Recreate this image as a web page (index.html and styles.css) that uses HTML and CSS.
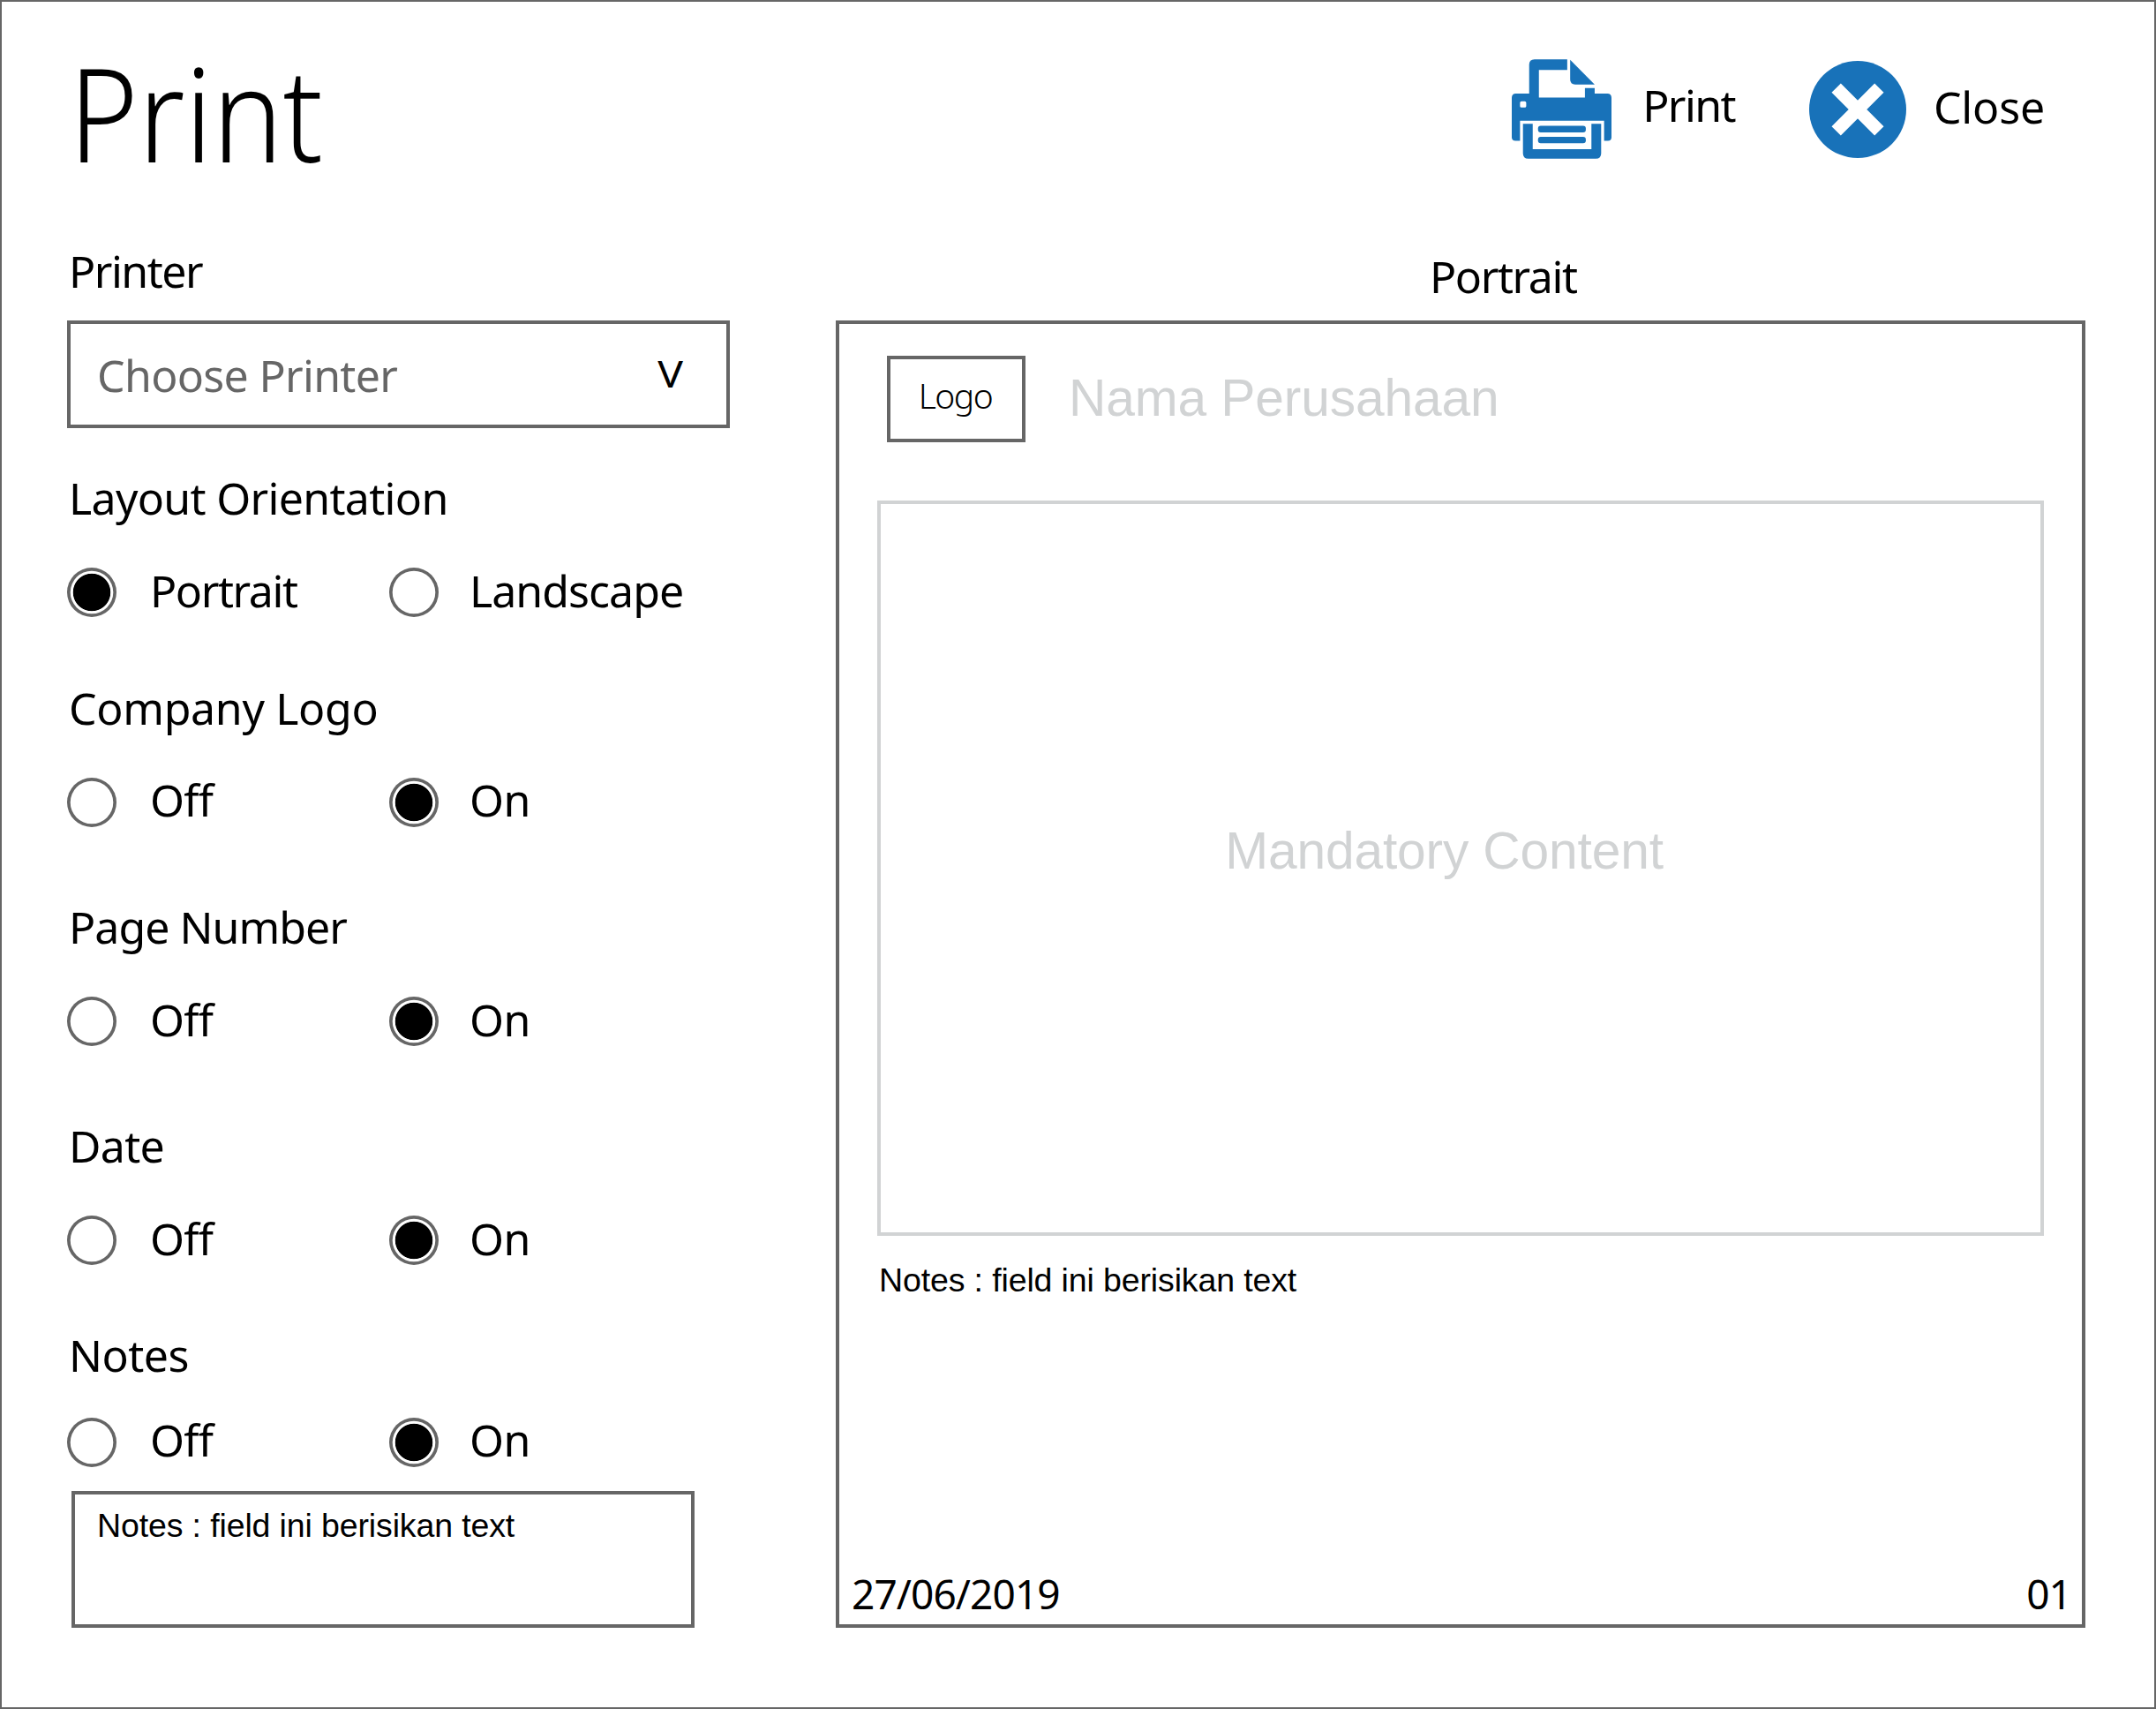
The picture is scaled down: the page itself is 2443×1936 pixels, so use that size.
FILE: index.html
```html
<!DOCTYPE html>
<html lang="en">
<head>
<meta charset="utf-8">
<title>Print</title>
<link rel="stylesheet" href="styles.css">
</head>
<body>
<div class="window">
  <header class="header">
    <h1 class="title">Print</h1>
    <div class="actions">
      <div class="action action-print">
        <svg class="icon-print" viewBox="73 81 338 338" aria-hidden="true">
          <path fill-rule="evenodd" d="M132 198V100Q132 82 150 82H261V118H165V211H321V179H354V198H397Q411 198 411 212V346Q411 358 399 358H386V290H101V358H86Q73 358 73 346V212Q73 198 87 198ZM106 224Q101 224 101 229V240Q101 245 106 245H117Q122 245 122 240V229Q122 224 117 224Z"/>
          <path d="M271 83L354 167H288Q271 167 271 150Z"/>
          <path d="M111 300H144V386H343V300H376V400Q376 418 358 418H129Q111 418 111 400Z"/>
          <rect x="162" y="307" width="162" height="22" rx="9"/>
          <rect x="162" y="344" width="162" height="22" rx="9"/>
        </svg>
        <span class="text action-label ls-print">Print</span>
      </div>
      <div class="action action-close">
        <svg class="icon-close" viewBox="0 0 330 330" aria-hidden="true">
          <circle cx="165" cy="165" r="165"/>
          <path class="cross" d="M92 92L238 238M238 92L92 238"/>
        </svg>
        <span class="text action-label ls-close">Close</span>
      </div>
    </div>
  </header>

  <main class="main">
    <section class="settings">
      <h2 class="text heading ls-printer">Printer</h2>
      <div class="select">
        <span class="text placeholder">Choose Printer</span>
        <span class="text arrow">V</span>
      </div>

      <div class="group group-layout">
        <h2 class="text heading ls-layout">Layout Orientation</h2>
        <div class="options">
          <div class="option"><i class="radio on"></i><span class="text ls-portrait">Portrait</span></div>
          <div class="option"><i class="radio"></i><span class="text ls-landscape">Landscape</span></div>
        </div>
      </div>
      <div class="group group-logo">
        <h2 class="text heading ls-company">Company Logo</h2>
        <div class="options raised">
          <div class="option"><i class="radio"></i><span class="text ls-off">Off</span></div>
          <div class="option"><i class="radio on"></i><span class="text ls-on">On</span></div>
        </div>
      </div>
      <div class="group group-page">
        <h2 class="text heading ls-page">Page Number</h2>
        <div class="options">
          <div class="option"><i class="radio"></i><span class="text ls-off">Off</span></div>
          <div class="option"><i class="radio on"></i><span class="text ls-on">On</span></div>
        </div>
      </div>
      <div class="group group-date">
        <h2 class="text heading ls-date">Date</h2>
        <div class="options">
          <div class="option"><i class="radio"></i><span class="text ls-off">Off</span></div>
          <div class="option"><i class="radio on"></i><span class="text ls-on">On</span></div>
        </div>
      </div>
      <div class="group group-notes">
        <h2 class="text heading ls-notes">Notes</h2>
        <div class="options raised">
          <div class="option"><i class="radio"></i><span class="text ls-off">Off</span></div>
          <div class="option"><i class="radio on"></i><span class="text ls-on">On</span></div>
        </div>
      </div>
      <div class="notes-box note-text">Notes : field ini berisikan text</div>
    </section>

    <section class="preview">
      <h2 class="text preview-title ls-portrait">Portrait</h2>
      <div class="sheet">
        <div class="sheet-head">
          <div class="logo"><span class="logo-text">Logo</span></div>
          <span class="company">Nama Perusahaan</span>
        </div>
        <div class="content">Mandatory Content</div>
        <div class="sheet-notes note-text">Notes : field ini berisikan text</div>
        <div class="sheet-foot"><span>27/06/2019</span><span>01</span></div>
      </div>
    </section>
  </main>
</div>
</body>
</html>
```
FILE: styles.css
```css
* { box-sizing: border-box; }

body { margin: 0; background: #fff; }

.window {
  width: 2443px;
  height: 1936px;
  border: 2px solid #666;
  font-family: "Noto Sans", sans-serif;
  color: #000;
  white-space: nowrap;
}

.text { font-size: 50px; line-height: 60px; font-weight: 400; margin: 0; }

/* per-label tracking */
.ls-print { letter-spacing: -1.6px; }
.ls-close { letter-spacing: -0.17px; }
.ls-printer { letter-spacing: -1.49px; }
.ls-layout { letter-spacing: -0.68px; }
.ls-portrait { letter-spacing: -1.4px; }
.ls-landscape { letter-spacing: -0.96px; }
.ls-company { letter-spacing: -0.32px; }
.ls-off { letter-spacing: -0.7px; }
.ls-on { letter-spacing: -0.6px; }
.ls-page { letter-spacing: -0.96px; }
.ls-date { letter-spacing: -0.7px; }
.ls-notes { letter-spacing: -0.5px; }

/* header */
.header {
  display: flex;
  justify-content: space-between;
  align-items: flex-start;
  height: 275px;
  padding: 25px 124px 0 76px;
}
.title {
  margin: 0;
  font-size: 147px;
  line-height: 200px;
  font-weight: 300;
  transform: scaleX(0.91);
  transform-origin: left;
}
.actions { display: flex; gap: 84px; margin-top: 40px; }
.action { display: flex; align-items: center; }
.action-print { gap: 35px; }
.action-close { gap: 31px; }
.action-print .action-label { padding-bottom: 9px; }
.action-close .action-label { padding-bottom: 5px; }
.icon-print { width: 113px; height: 113px; fill: #1872b9; }
.icon-close { width: 110px; height: 110px; fill: #1872b9; }
.cross { stroke: #fff; stroke-width: 44; }

/* columns */
.main { display: flex; padding-left: 74px; }
.settings { width: 751px; margin-right: 120px; }
.heading { padding-left: 2px; }

.select {
  display: flex;
  justify-content: space-between;
  align-items: center;
  height: 122px;
  margin: 26px 0 49px;
  padding: 0 51px 0 30px;
  border: 4px solid #666;
}
.placeholder { color: #666; letter-spacing: -0.68px; padding-top: 1px; }
.arrow { font-size: 42px; transform: scaleX(1.14); padding-bottom: 3px; }

.group { display: grid; row-gap: 49px; }
.group-layout { margin-bottom: 73px; }
.group-logo, .group-page { margin-bottom: 83px; }
.group-date { margin-bottom: 72px; }
.group-notes { row-gap: 41px; margin-bottom: 27px; }

.options { display: grid; grid-template-columns: 365px 1fr; }
.option { display: flex; align-items: center; height: 56px; gap: 38px; }
.option + .option { gap: 35px; }
.option .text { padding-bottom: 4px; }
.raised .text { padding-bottom: 6px; }

.radio {
  width: 56px;
  height: 56px;
  border-radius: 50%;
  box-shadow: inset 0 0 0 3.7px #666;
}
.radio.on { background: radial-gradient(circle, #000 20.8px, #fff 21.6px); }

.note-text {
  font-family: "Liberation Sans", Arial, sans-serif;
  font-size: 37.5px;
  line-height: 42px;
  letter-spacing: -0.13px;
}
.notes-box {
  width: 706px;
  height: 155px;
  margin-left: 5px;
  padding: 14px 25px;
  border: 4px solid #666;
}

/* preview */
.preview { width: 1416px; padding-top: 6px; }
.preview-title { padding-left: 673px; margin-bottom: 20px; }
.sheet {
  display: flex;
  flex-direction: column;
  height: 1481px;
  border: 4px solid #666;
  padding-top: 36px;
}
.sheet-head { display: flex; align-items: center; gap: 49px; padding-left: 54px; }
.logo {
  display: flex;
  align-items: center;
  justify-content: center;
  width: 157px;
  height: 98px;
  border: 4px solid #666;
}
.logo-text { font-size: 39px; line-height: 50px; font-weight: 300; letter-spacing: -1.49px; padding: 0 2px 9px 0; }
.company, .content {
  font-family: "Liberation Sans", Arial, sans-serif;
  font-size: 58.7px;
  line-height: 66px;
  color: #d1d3d4;
}
.company { letter-spacing: -0.12px; padding-bottom: 3px; }
.content {
  display: flex;
  align-items: center;
  justify-content: center;
  width: 1322px;
  height: 833px;
  margin: 66px 0 29px 43px;
  padding: 0 37px 40px 0;
  border: 4px solid #d1d3d4;
  letter-spacing: -0.15px;
}
.sheet-notes { padding-left: 45px; }
.sheet-foot {
  display: flex;
  justify-content: space-between;
  margin-top: auto;
  padding: 0 12px 4px 14px;
  font-size: 46px;
  line-height: 62px;
  letter-spacing: -0.9px;
}
```
